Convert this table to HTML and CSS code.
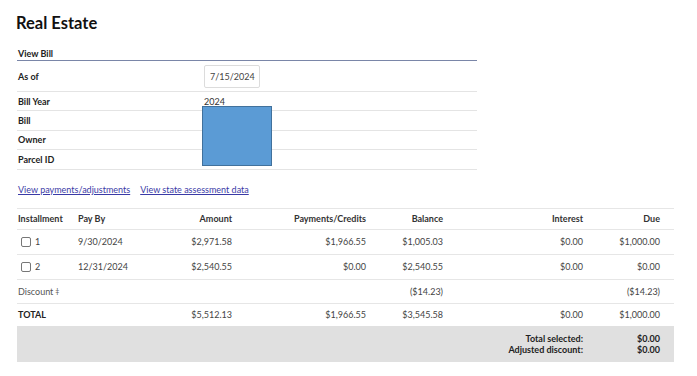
FILE: index.html
```html
<!DOCTYPE html>
<html>
<head>
<meta charset="utf-8">
<link rel="stylesheet" href="styles.css">
</head>
<body>
<div class="page">
  <h1 class="title">Real Estate</h1>
  <div class="info">
    <div class="info-head">View Bill</div>
    <div class="info-row asof">
      <div class="label">As of</div>
      <div class="value"><div class="date-input">7/15/2024</div></div>
    </div>
    <div class="info-row">
      <div class="label">Bill Year</div>
      <div class="value">2024</div>
    </div>
    <div class="info-row">
      <div class="label">Bill</div>
      <div class="value"></div>
    </div>
    <div class="info-row">
      <div class="label">Owner</div>
      <div class="value"></div>
    </div>
    <div class="info-row">
      <div class="label">Parcel ID</div>
      <div class="value"></div>
    </div>
    <div class="redact"></div>
  </div>
  <div class="links">
    <a href="#">View payments/adjustments</a>
    <a href="#">View state assessment data</a>
  </div>
  <div class="bill-table">
    <div class="trow thead">
      <div class="c1">Installment</div>
      <div class="c2">Pay By</div>
      <div class="num">Amount</div>
      <div class="num">Payments/Credits</div>
      <div class="num">Balance</div>
      <div class="num">Interest</div>
      <div class="num">Due</div>
    </div>
    <div class="trow body">
      <div class="c1"><span class="cb"></span>1</div>
      <div class="c2">9/30/2024</div>
      <div class="num">$2,971.58</div>
      <div class="num">$1,966.55</div>
      <div class="num">$1,005.03</div>
      <div class="num">$0.00</div>
      <div class="num">$1,000.00</div>
    </div>
    <div class="trow body">
      <div class="c1"><span class="cb"></span>2</div>
      <div class="c2">12/31/2024</div>
      <div class="num">$2,540.55</div>
      <div class="num">$0.00</div>
      <div class="num">$2,540.55</div>
      <div class="num">$0.00</div>
      <div class="num">$0.00</div>
    </div>
    <div class="trow disc">
      <div class="c1 wide">Discount <span class="dag">&#8225;</span></div>
      <div class="num"></div>
      <div class="num">($14.23)</div>
      <div class="num"></div>
      <div class="num">($14.23)</div>
    </div>
    <div class="trow total">
      <div class="c1 strong">TOTAL</div>
      <div class="c2"></div>
      <div class="num">$5,512.13</div>
      <div class="num">$1,966.55</div>
      <div class="num">$3,545.58</div>
      <div class="num">$0.00</div>
      <div class="num">$1,000.00</div>
    </div>
    <div class="summary">
      <div class="srow"><span class="slabel">Total selected:</span><span class="sval">$0.00</span></div>
      <div class="srow"><span class="slabel">Adjusted discount:</span><span class="sval">$0.00</span></div>
    </div>
  </div>
</div>
</body>
</html>
```
FILE: styles.css
```css
* { box-sizing: border-box; }
body {
  margin: 0;
  background: #fff;
  font-family: "Lato", "Open Sans", sans-serif;
  font-size: 9px;
  color: #333;
}
.page {
  padding: 12px 0 0 17px;
}
.title {
  margin: 0 0 0 -1px;
  font-size: 16.5px;
  font-weight: 700;
  color: #111;
  line-height: 22px;
}
.info {
  width: 460px;
  margin-top: 14px;
  position: relative;
}
.info-head {
  font-weight: 700;
  color: #222;
  line-height: 12px;
  padding: 0 0 0 1px;
  border-bottom: 1px solid #7a86a8;
}
.info-row {
  display: flex;
  align-items: center;
  height: 19.4px;
  border-bottom: 1px solid #e4e4e4;
}
.info-row.asof { height: 31px; }
.label {
  width: 187px;
  padding-left: 1px;
  font-weight: 700;
  color: #222;
}
.value { color: #333; }
.date-input {
  width: 56px;
  height: 23px;
  border: 1px solid #dcdcdc;
  border-radius: 2px;
  display: flex;
  align-items: center;
  padding-left: 5px;
  color: #444;
}
.redact {
  position: absolute;
  left: 185px;
  top: 58px;
  width: 70px;
  height: 60px;
  background: #5b9bd5;
  border: 1px solid #41719c;
}
.links {
  margin-top: 14px;
  padding-left: 1px;
  display: flex;
  gap: 10px;
}
.links a {
  color: #3a3aa6;
  text-decoration: underline;
}
.bill-table {
  margin-top: 13px;
  width: 657px;
  border-top: 1px solid #e6e6e6;
}
.trow {
  display: grid;
  grid-template-columns: 60px 80px 74px 134px 77px 140px 77px;
  padding: 0 14px 0 1px;
  align-items: center;
  border-bottom: 1px solid #e6e6e6;
}
.thead { height: 21px; font-weight: 700; color: #333; }
.body { height: 25px; }
.disc { height: 24px; }
.disc .wide { grid-column: span 3; color: #555; }
.dag { font-size: 7px; margin-left: 2px; }
.total { height: 22px; border-bottom: none; }
.num { text-align: right; }
.body, .disc, .total { color: #444; }
.strong { font-weight: 700; color: #222; }
.c1 { display: flex; align-items: center; }
.cb {
  display: inline-block;
  width: 10px;
  height: 10px;
  border: 1px solid #777;
  border-radius: 2px;
  margin: 0 4px 0 3px;
}
.summary {
  background: #e0e0e0;
  height: 36px;
  padding: 7px 14px 0 0;
}
.srow {
  display: flex;
  justify-content: flex-end;
  font-weight: 700;
  color: #222;
  line-height: 11.5px;
}
.slabel { text-align: right; }
.sval { width: 77px; text-align: right; }
```
